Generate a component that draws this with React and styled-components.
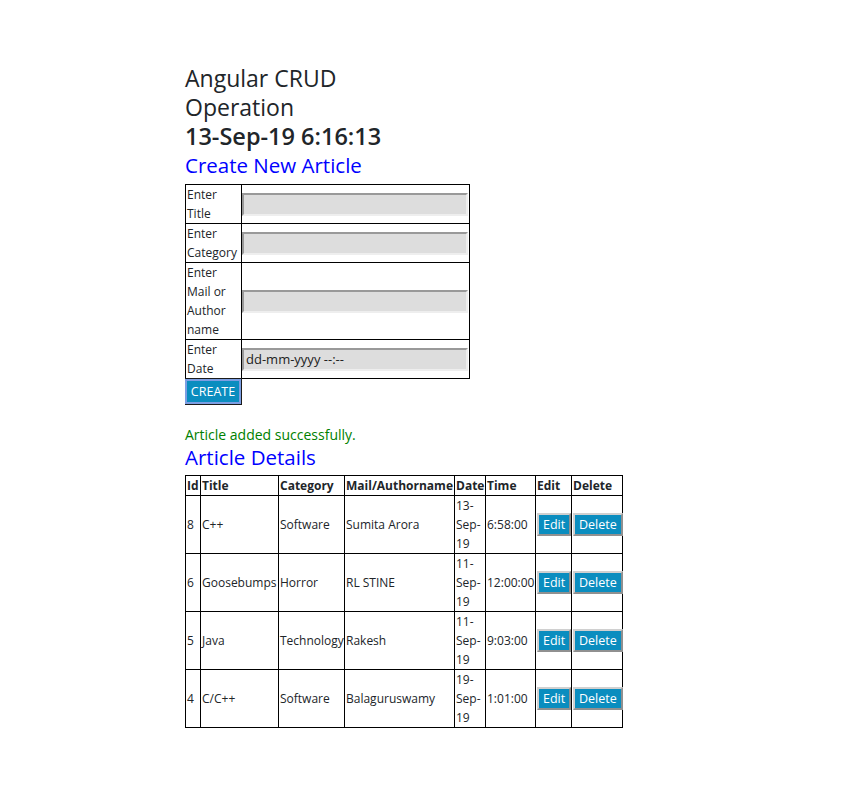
import styled, { createGlobalStyle } from "styled-components";

const articles = [
  { id: 8, title: "C++", category: "Software", author: "Sumita Arora", date: "13-Sep-19", time: "6:58:00" },
  { id: 6, title: "Goosebumps", category: "Horror", author: "RL STINE", date: "11-Sep-19", time: "12:00:00" },
  { id: 5, title: "Java", category: "Technology", author: "Rakesh", date: "11-Sep-19", time: "9:03:00" },
  { id: 4, title: "C/C++", category: "Software", author: "Balaguruswamy", date: "19-Sep-19", time: "1:01:00" },
];

// content widths; each cell adds 1px padding + 1px border
const columns = [
  { label: "Id", width: 13 },
  { label: "Title", width: 76 },
  { label: "Category", width: 64 },
  { label: "Mail/Authorname", width: 108 },
  { label: "Date", width: 29 },
  { label: "Time", width: 48 },
  { label: "Edit", width: 34 },
  { label: "Delete", width: 49 },
];

const GlobalStyle = createGlobalStyle`
  body {
    margin: 0;
    background: #fff;
    color: #212529;
    font-family: "Open Sans", "Noto Sans", sans-serif;
  }
`;

export default function App() {
  return (
    <>
      <GlobalStyle />
      <Page>
        <Title>Angular CRUD Operation</Title>
        <Clock>13-Sep-19 6:16:13</Clock>
        <SectionTitle>Create New Article</SectionTitle>
        <FormTable>
          <tbody>
            <tr>
              <LabelCell>Enter Title</LabelCell>
              <InputCell><Field type="text" /></InputCell>
            </tr>
            <tr>
              <LabelCell>Enter Category</LabelCell>
              <InputCell><Field type="text" /></InputCell>
            </tr>
            <tr>
              <LabelCell>Enter Mail or Author name</LabelCell>
              <InputCell><Field type="text" /></InputCell>
            </tr>
            <tr>
              <LabelCell>Enter Date</LabelCell>
              <InputCell><Field type="text" readOnly defaultValue="dd-mm-yyyy --:--" /></InputCell>
            </tr>
          </tbody>
        </FormTable>
        <CreateButton>CREATE</CreateButton>
        <Message>Article added successfully.</Message>
        <SectionTitle $compact>Article Details</SectionTitle>
        <ArticleTable>
          <thead>
            <tr>
              {columns.map((c) => (
                <HeadCell key={c.label} style={{ width: c.width }}>{c.label}</HeadCell>
              ))}
            </tr>
          </thead>
          <tbody>
            {articles.map((a) => (
              <tr key={a.id}>
                <Cell>{a.id}</Cell>
                <Cell>{a.title}</Cell>
                <Cell>{a.category}</Cell>
                <Cell>{a.author}</Cell>
                <Cell $wrap>{a.date}</Cell>
                <Cell>{a.time}</Cell>
                <Cell $center><ActionButton>Edit</ActionButton></Cell>
                <Cell $center><ActionButton>Delete</ActionButton></Cell>
              </tr>
            ))}
          </tbody>
        </ArticleTable>
      </Page>
    </>
  );
}

const Page = styled.div`
  padding: 64px 0 40px 185px;
`;

const Title = styled.h1`
  width: 200px;
  margin: 0;
  font-size: 23px;
  line-height: 29px;
  font-weight: 400;
  color: #212529;
`;

const Clock = styled.h2`
  margin: 0;
  font-size: 23.5px;
  line-height: 29px;
  font-weight: 600;
  color: #212529;
`;

const SectionTitle = styled.h3`
  margin: ${(p) => (p.$compact ? "0 0 4px" : "1px 0 5px")};
  font-size: 20.5px;
  line-height: 27px;
  font-weight: 400;
  color: #0000ff;
`;

const FormTable = styled.table`
  width: 285px;
  border-collapse: collapse;
  font-size: 12px;
  line-height: 19px;
`;

const LabelCell = styled.td`
  width: 54px;
  padding: 0 0 0 1px;
  border: 1px solid #000;
  vertical-align: top;
  color: #212529;
`;

const InputCell = styled.td`
  padding: 0 1px 0 0;
  border: 1px solid #000;
  vertical-align: middle;
`;

const Field = styled.input`
  display: block;
  box-sizing: border-box;
  width: 226px;
  height: 23px;
  margin: 0;
  padding: 0 2px;
  background: #dddddd;
  border: 2px solid;
  border-color: #999 #eee #eee #999;
  font-family: inherit;
  font-size: 13px;
  color: #222;
  outline: none;
`;

const CreateButton = styled.button`
  display: block;
  box-sizing: border-box;
  width: 56px;
  height: 25px;
  margin: 0;
  padding: 0;
  background: #0a8dbf;
  color: #fff;
  border: 2px solid #7c9ee2;
  box-shadow: 0 0 0 1px #1a1a1a;
  font-family: inherit;
  font-size: 12.5px;
  clip-path: inset(-1px -1px -1px 0);
`;

const Message = styled.div`
  margin-top: 21px;
  font-size: 14px;
  line-height: 19px;
  color: #008000;
`;

const ArticleTable = styled.table`
  width: 438px;
  border-collapse: collapse;
  table-layout: fixed;
  font-size: 12px;
  line-height: 19px;
`;

const HeadCell = styled.th`
  padding: 0 0 0 1px;
  border: 1px solid #000;
  text-align: left;
  font-size: 12px;
  font-weight: 700;
  white-space: nowrap;
  overflow: visible;
`;

const Cell = styled.td`
  padding: 0 0 0 1px;
  border: 1px solid #000;
  height: 57px;
  white-space: ${(p) => (p.$wrap ? "normal" : "nowrap")};
  text-align: ${(p) => (p.$center ? "center" : "left")};
  vertical-align: middle;
`;

const ActionButton = styled.button`
  box-sizing: border-box;
  height: 23px;
  margin: 0;
  padding: 0 4px;
  background: #0a8dbf;
  color: #fff;
  border: 2px solid;
  border-color: #d0d0d0 #909090 #909090 #d0d0d0;
  font-family: inherit;
  font-size: 12.5px;
  line-height: 19px;
  vertical-align: middle;
`;
